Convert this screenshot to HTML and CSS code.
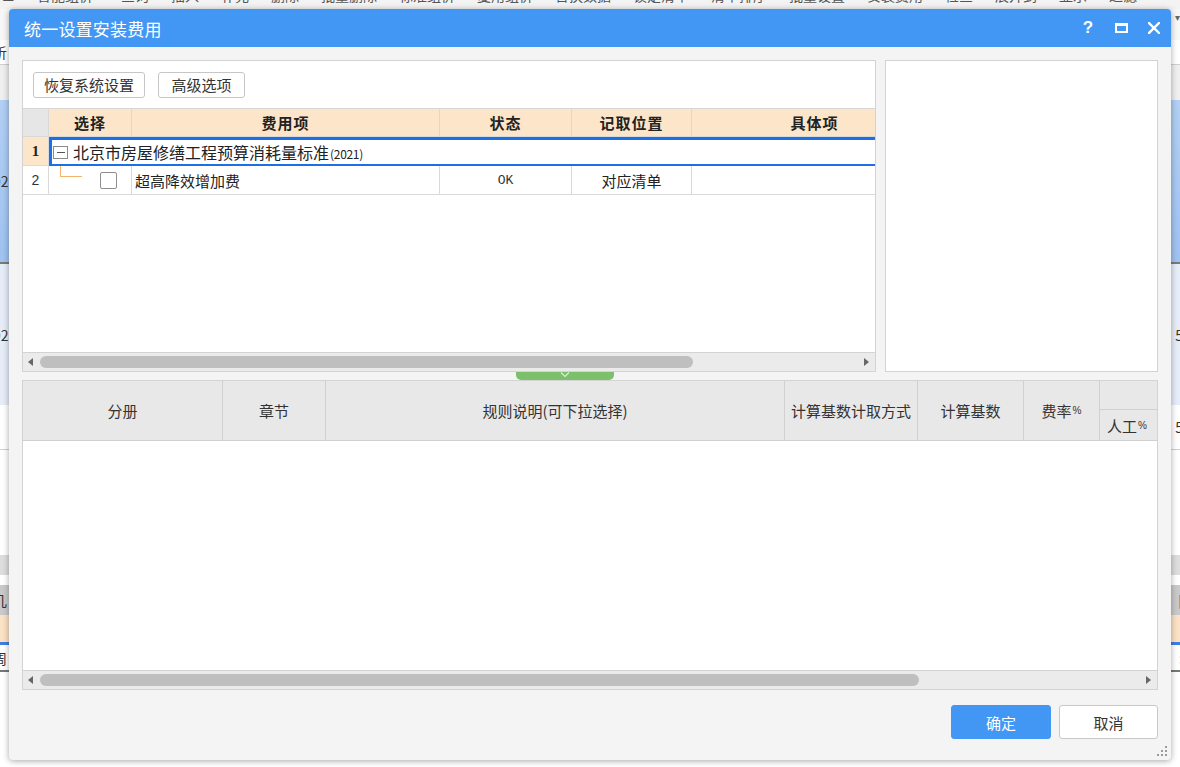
FILE: index.html
```html
<!DOCTYPE html>
<html lang="zh-CN">
<head>
<meta charset="utf-8">
<title>统一设置安装费用</title>
<link rel="stylesheet" href="styles.css">
</head>
<body>
<div class="app">
  <div class="app-menu">
    <span class="mi">☰</span><span class="mi w1">智能组价</span><span class="mi">查询</span><span class="mi">插入</span><span class="mi">补充</span><span class="mi">删除</span><span class="mi">批量删除</span><span class="mi">标准组价</span><span class="mi">复用组价</span><span class="mi">替换数据</span><span class="mi">锁定清单</span><span class="mi">清单排序</span><span class="mi">批量设置</span><span class="mi">安装费用</span><span class="mi">检查</span><span class="mi">展开到</span><span class="mi">显示</span><span class="mi">过滤</span>
  </div>
  <div class="bg-row r1"><span class="l"></span><span class="r">▾</span></div>
  <div class="bg-row r2"><span class="l">析</span><span class="r"></span></div>
  <div class="bg-row r3"><span class="l"></span><span class="r"></span></div>
  <div class="bg-row r4"><span class="l">92</span><span class="r"></span></div>
  <div class="bg-row r5"></div>
  <div class="bg-row r6"><span class="l">92</span><span class="r">5</span></div>
  <div class="bg-row r7"><span class="l"></span><span class="r">5</span></div>
  <div class="bg-row r8"></div>
  <div class="bg-row r9"></div>
  <div class="bg-row r10"></div>
  <div class="bg-row r11"><span class="l">几</span><span class="r">[</span></div>
  <div class="bg-row r12"></div>
  <div class="bg-row r13"></div>
  <div class="bg-row r14"><span class="l">周</span><span class="r">:</span></div>
  <div class="bg-row r15"></div>
  <div class="bg-row r16"></div>
</div>

<div class="dialog">
  <div class="dlg-title">
    <span class="dlg-name">统一设置安装费用</span>
    <div class="dlg-ctrls">
      <span class="ctrl help">?</span>
      <span class="ctrl">
        <svg width="13" height="10" viewBox="0 0 13 10"><rect x="1" y="1.5" width="11" height="7.5" fill="none" stroke="#fff" stroke-width="2"/><rect x="0" y="0" width="13" height="3" fill="#fff"/></svg>
      </span>
      <span class="ctrl">
        <svg width="12" height="12" viewBox="0 0 12 12"><path d="M1 1 L11 11 M11 1 L1 11" stroke="#fff" stroke-width="2.4" stroke-linecap="square"/></svg>
      </span>
    </div>
  </div>

  <div class="dlg-body">
    <div class="upper">
      <div class="panel fee-panel">
        <div class="toolbar">
          <button class="btn btn-restore">恢复系统设置</button>
          <button class="btn btn-adv">高级选项</button>
        </div>
        <div class="grid">
          <div class="grow ghead">
            <div class="rn"></div>
            <div>选择</div>
            <div>费用项</div>
            <div>状态</div>
            <div>记取位置</div>
            <div>具体项</div>
          </div>
          <div class="grow grow-group">
            <div class="rn rn-sel">1</div>
            <div class="group-cell"><span class="minus"></span><span class="group-text">北京市房屋修缮工程预算消耗量标准<span class="yr">(2021)</span></span></div>
          </div>
          <div class="grow grow-item">
            <div class="rn rn-plain">2</div>
            <div class="tree-cell"><span class="tree"></span><span class="chk"></span></div>
            <div class="name">超高降效增加费</div>
            <div class="center mono">OK</div>
            <div class="center">对应清单</div>
            <div></div>
          </div>
        </div>
        <div class="hscroll">
          <span class="arr arr-l"></span>
          <div class="track"><div class="thumb thumb-up"></div></div>
          <span class="arr arr-r"></span>
        </div>
      </div>
      <div class="panel side-panel"></div>
    </div>

    <div class="splitter">
      <div class="handle">
        <svg width="10" height="6" viewBox="0 0 10 6"><path d="M1 0.5 L5 4.5 L9 0.5" fill="none" stroke="#d8f0d0" stroke-width="1.2"/></svg>
      </div>
    </div>

    <div class="panel rule-panel">
      <div class="rhead">
        <div class="hc">分册</div>
        <div class="hc">章节</div>
        <div class="hc">规则说明(可下拉选择)</div>
        <div class="hc">计算基数计取方式</div>
        <div class="hc">计算基数</div>
        <div class="hc">费率<span class="pct">%</span></div>
        <div class="hc-group">
          <div class="hc-top"></div>
          <div class="hc-sub">人工<span class="pct">%</span></div>
        </div>
      </div>
      <div class="rule-empty"></div>
      <div class="hscroll">
        <span class="arr arr-l"></span>
        <div class="track"><div class="thumb thumb-low"></div></div>
        <span class="arr arr-r"></span>
      </div>
    </div>

    <div class="footer">
      <button class="fbtn ok">确定</button>
      <button class="fbtn cancel">取消</button>
    </div>
  </div>

  <svg class="grip" width="11" height="11" viewBox="0 0 11 11">
    <rect x="8" y="0" width="2" height="2" fill="#9a9a9a"/>
    <rect x="4" y="4" width="2" height="2" fill="#9a9a9a"/>
    <rect x="8" y="4" width="2" height="2" fill="#9a9a9a"/>
    <rect x="0" y="8" width="2" height="2" fill="#9a9a9a"/>
    <rect x="4" y="8" width="2" height="2" fill="#9a9a9a"/>
    <rect x="8" y="8" width="2" height="2" fill="#9a9a9a"/>
  </svg>
</div>
</body>
</html>
```

FILE: styles.css
```css
* { box-sizing: border-box; }
html, body { margin: 0; padding: 0; }
body {
  width: 1180px;
  height: 767px;
  overflow: hidden;
  position: relative;
  background: #ffffff;
  font-family: "Noto Sans CJK SC", "Noto Sans", sans-serif;
  color: #222;
}

/* ---------- background application ---------- */
.app {
  display: flex;
  flex-direction: column;
  height: 767px;
  font-size: 14px;
  color: #333;
}
.app-menu {
  height: 9px;
  overflow: hidden;
  background: #f3f3f3;
  display: flex;
  align-items: flex-start;
  gap: 22px;
  padding-left: 2px;
  white-space: nowrap;
}
.app-menu .mi { margin-top: -15px; line-height: 20px; color: #555; }
.app-menu .w1 { margin-right: 6px; }

.bg-row {
  display: flex;
  justify-content: space-between;
  align-items: center;
  white-space: nowrap;
  font-size: 14px;
  color: #333;
}
.bg-row .l { margin-left: -7px; }
.bg-row .r { margin-right: -3px; }
.r1 { height: 31px; background: #f7f7f7; align-items: flex-start; }
.r1 .r { margin-right: 0; font-size: 10px; color: #666; }
.r2 { height: 24px; background: #ffffff; }
.r3 { height: 36px; background: #efefef; border-top: 1px solid #cfcfcf; }
.r4 { height: 162px; background: linear-gradient(#b2cff4, #9fc2f0); }
.r5 { height: 2px; background: #7a7a7a; }
.r6 { height: 141px; background: #e6edf8; }
.r7 { height: 45px; background: #ffffff; border-bottom: 1px solid #d0d0d0; }
.r8 { height: 105px; background: #ffffff; }
.r9 { height: 20px; background: #dddddd; }
.r10 { height: 10px; background: #ffffff; }
.r11 { height: 30px; background: #c9c9c9; }
.r12 { height: 27px; background: #fbe2c6; }
.r13 { height: 3px; background: #3d7fe0; }
.r14 { height: 25px; background: #ffffff; }
.r15 { height: 2px; background: #777; }
.r16 { flex: 1; background: #ffffff; }

/* ---------- dialog ---------- */
.dialog {
  position: absolute;
  left: 9px;
  top: 9px;
  width: 1162px;
  height: 751px;
  background: #f4f4f4;
  border-radius: 4px;
  box-shadow: 0 1px 6px rgba(0, 0, 0, 0.35);
  display: flex;
  flex-direction: column;
  overflow: hidden;
}
.dlg-title {
  height: 38px;
  flex: none;
  background: #4297f5;
  color: #fff;
  display: flex;
  align-items: center;
  justify-content: space-between;
  padding: 0 5px 0 15px;
}
.dlg-name { font-size: 17px; letter-spacing: 0.2px; }
.dlg-ctrls { display: flex; gap: 9px; align-items: center; }
.ctrl {
  width: 24px;
  height: 24px;
  display: flex;
  align-items: center;
  justify-content: center;
}
.ctrl.help {
  font-family: "Liberation Sans", Arial, sans-serif;
  font-weight: bold;
  font-size: 17px;
}

.dlg-body {
  flex: 1;
  padding: 13px 13px 0;
  display: flex;
  flex-direction: column;
}
.upper { display: flex; gap: 9px; height: 312px; flex: none; }
.panel { background: #fff; border: 1px solid #d3d3d3; }
.fee-panel {
  width: 854px;
  display: flex;
  flex-direction: column;
  overflow: hidden;
}
.side-panel { flex: 1; }

.toolbar {
  height: 47px;
  flex: none;
  padding: 11px 10px 0;
  display: flex;
  gap: 13px;
  align-items: flex-start;
}
.btn {
  height: 26px;
  border: 1px solid #c6c6c6;
  border-radius: 3px;
  background: #fff;
  font-family: "Noto Sans CJK SC", sans-serif;
  font-size: 15px;
  color: #333;
  padding: 0;
  line-height: 24px;
}
.btn-restore { width: 112px; }
.btn-adv { width: 87px; }

.grid {
  flex: 1;
  overflow: hidden;
  border-top: 1px solid #d6d6d6;
}
.grow {
  display: grid;
  grid-template-columns: 26px 83px 308px 132px 120px 246px;
  width: 915px;
  height: 29px;
}
.grow > div {
  border-right: 1px solid #d9d9d9;
  border-bottom: 1px solid #d9d9d9;
  display: flex;
  align-items: center;
  overflow: hidden;
  white-space: nowrap;
}
.ghead { height: 28px; }
.ghead > div {
  background: #fce5c9;
  justify-content: center;
  font-weight: bold;
  font-size: 15px;
  letter-spacing: 1px;
  color: #222;
}
.ghead > .rn { background: #e6e6e6; }
.rn { justify-content: center; }
.grow > .rn-sel {
  background: #fce5c9;
  font-family: "Liberation Serif", serif;
  font-weight: bold;
  font-size: 15px;
}
.grow > .rn-plain {
  font-family: "Liberation Sans", sans-serif;
  font-size: 14px;
  color: #333;
}
.grow > .group-cell {
  grid-column: 2 / -1;
  border: 3px solid #1c6fe4;
  border-bottom-width: 2px;
  border-right: none;
  padding-left: 1px;
  gap: 5px;
}
.minus {
  width: 15px;
  height: 13px;
  border: 1px solid #8a8a8a;
  background: #fff;
  display: flex;
  align-items: center;
  justify-content: center;
}
.minus::after {
  content: "";
  width: 8px;
  height: 1px;
  background: #555;
}
.group-text { font-size: 16px; color: #222; }
.yr { font-size: 12px; letter-spacing: -0.3px; margin-left: 1px; }

.grow > .tree-cell { align-items: flex-start; }
.tree {
  width: 22px;
  height: 11px;
  margin-left: 11px;
  border-left: 1px solid #f3b36a;
  border-bottom: 1px solid #f3b36a;
}
.chk {
  width: 17px;
  height: 17px;
  margin: 6px 0 0 18px;
  border: 1px solid #8e8e8e;
  border-radius: 2px;
  background: #fff;
}
.grow > .name { padding-left: 3px; font-size: 15px; color: #222; }
.grow > .center { justify-content: center; font-size: 15px; color: #222; }
.grow > .mono { font-family: "Liberation Mono", monospace; font-size: 13px; color: #333; }

.hscroll {
  height: 19px;
  flex: none;
  border-top: 1px solid #d3d3d3;
  background: #ebebeb;
  display: flex;
  align-items: stretch;
}
.arr { width: 15px; display: flex; align-items: center; justify-content: center; }
.arr-r { width: 17px; }
.arr-l::before {
  content: "";
  border-right: 5px solid #666;
  border-top: 4px solid transparent;
  border-bottom: 4px solid transparent;
}
.arr-r::before {
  content: "";
  border-left: 5px solid #666;
  border-top: 4px solid transparent;
  border-bottom: 4px solid transparent;
}
.track { flex: 1; padding: 3px 2px; }
.thumb { height: 12px; background: #bfbfbf; border-radius: 6px; }
.thumb-up { width: 653px; }
.thumb-low { width: 879px; }

.splitter { height: 8px; flex: none; padding-left: 494px; }
.handle {
  width: 98px;
  height: 8px;
  background: #7cc06b;
  border-radius: 0 0 5px 5px;
  display: flex;
  justify-content: center;
  align-items: flex-start;
}

.rule-panel {
  height: 310px;
  flex: none;
  display: flex;
  flex-direction: column;
  overflow: hidden;
}
.rhead {
  height: 60px;
  flex: none;
  display: grid;
  grid-template-columns: 200px 103px 459px 133px 106px 76px 80px;
  background: #e8e8e8;
  border-bottom: 1px solid #d0d0d0;
}
.hc {
  border-right: 1px solid #d0d0d0;
  display: flex;
  align-items: center;
  justify-content: center;
  font-size: 15px;
  color: #333;
  white-space: nowrap;
}
.pct { font-size: 10px; font-family: "Liberation Sans", sans-serif; margin-left: 1px; }
.hc-group { display: flex; flex-direction: column; }
.hc-top { height: 29px; border-bottom: 1px solid #d0d0d0; }
.hc-sub {
  flex: 1;
  display: flex;
  align-items: center;
  padding-left: 7px;
  font-size: 15px;
  color: #333;
  border-right: 1px solid #d0d0d0;
}
.rule-empty { flex: 1; background: #fff; }

.footer {
  display: flex;
  justify-content: flex-end;
  gap: 8px;
  padding-top: 15px;
}
.fbtn {
  height: 34px;
  border-radius: 3px;
  font-family: "Noto Sans CJK SC", sans-serif;
  font-size: 15px;
  padding: 0;
}
.fbtn.ok { width: 100px; background: #4297f5; border: 1px solid #4297f5; color: #fff; }
.fbtn.cancel { width: 99px; background: #fff; border: 1px solid #c8c8c8; color: #333; }

.grip { position: absolute; right: 3px; bottom: 3px; }
```
